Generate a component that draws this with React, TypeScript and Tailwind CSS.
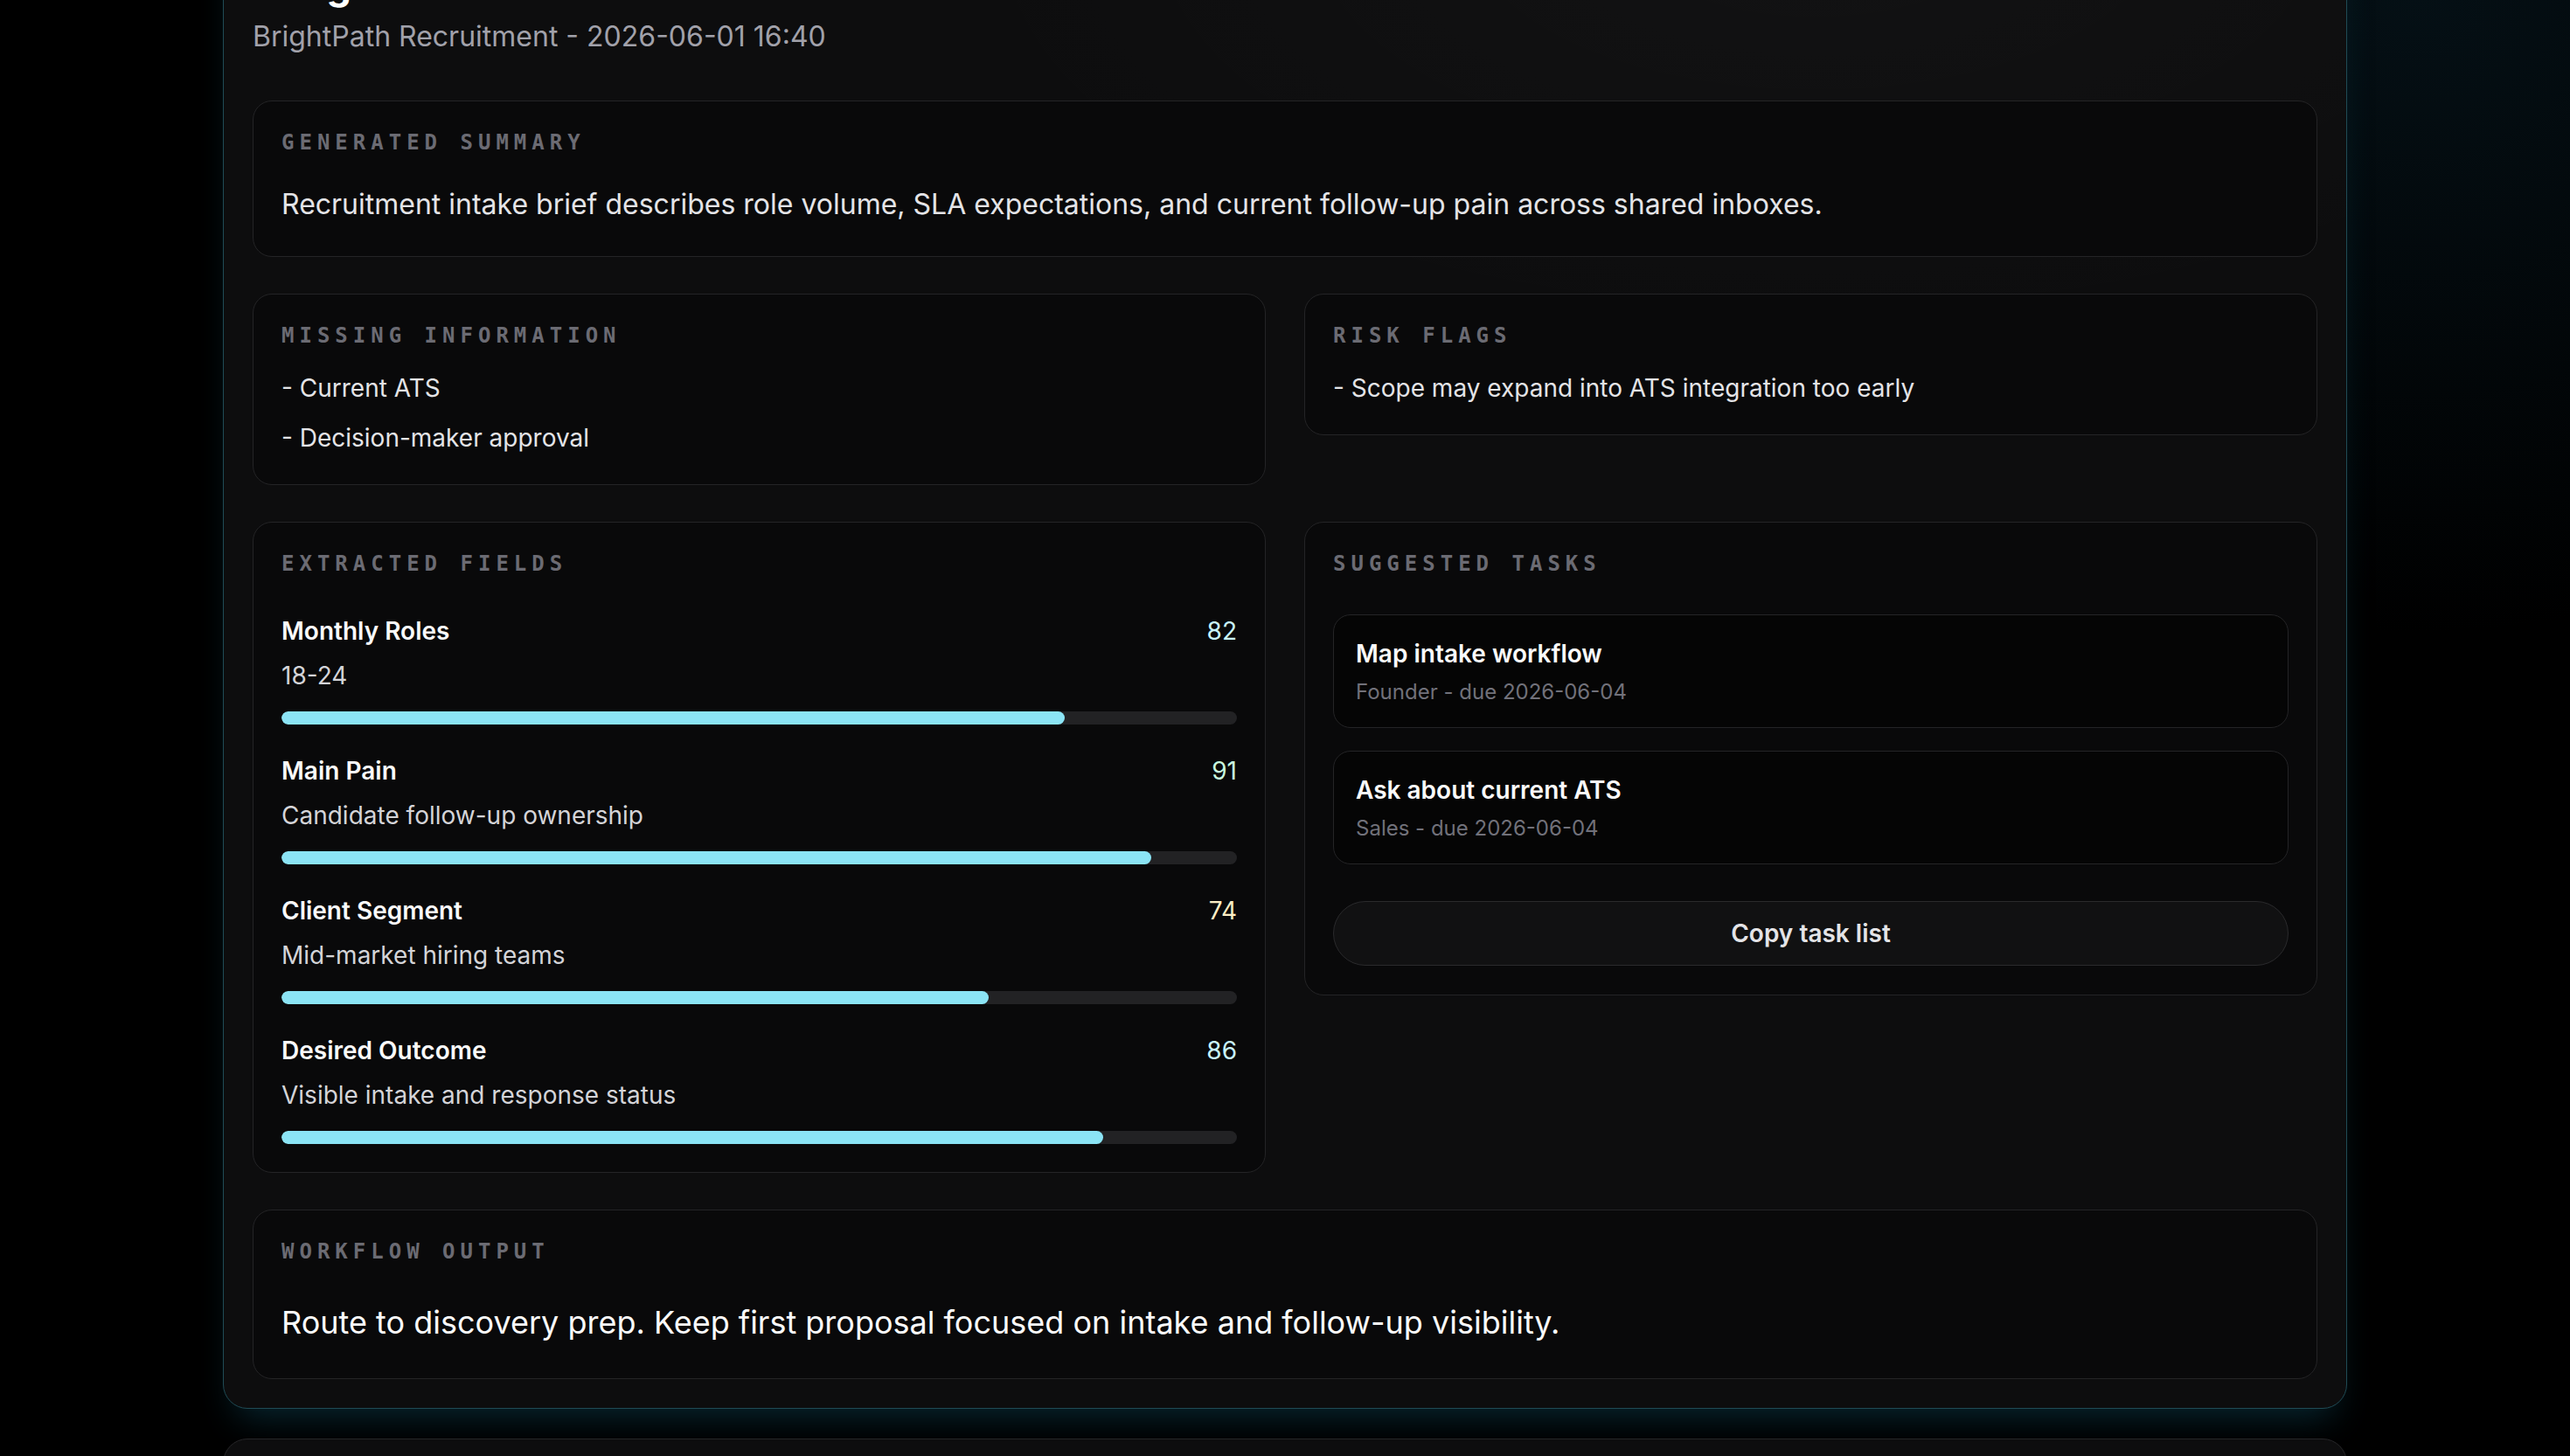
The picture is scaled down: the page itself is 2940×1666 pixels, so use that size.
import React from "react"

const fields = [
  { label: "Monthly Roles", value: "18-24", score: 82 },
  { label: "Main Pain", value: "Candidate follow-up ownership", score: 91 },
  { label: "Client Segment", value: "Mid-market hiring teams", score: 74 },
  { label: "Desired Outcome", value: "Visible intake and response status", score: 86 },
]

const tasks = [
  { title: "Map intake workflow", owner: "Founder", due: "2026-06-04" },
  { title: "Ask about current ATS", owner: "Sales", due: "2026-06-04" },
]

function scoreColor(score: number) {
  if (score >= 90) return "text-[#c8f7df]"
  if (score >= 80) return "text-[#c9f5fc]"
  return "text-[#fdeec4]"
}

function Card({ title, children, className = "" }: { title: string; children: React.ReactNode; className?: string }) {
  return (
    <section className={`rounded-[22px] border border-[#242426] bg-[#09090a] px-[32px] pt-[31px] pb-[32px] ${className}`}>
      <h3 className="font-['DejaVu_Sans_Mono',monospace] text-[24px] leading-[33px] font-bold uppercase tracking-[0.25em] text-[#6b6b73]">
        {title}
      </h3>
      {children}
    </section>
  )
}

export default function App() {
  return (
    <div className="min-h-screen overflow-hidden bg-black bg-[radial-gradient(ellipse_40%_55%_at_94%_0%,rgba(16,52,70,0.3),transparent_70%)] font-['Inter',sans-serif]">
      <div className="mx-auto -mt-[81px] w-[2430px]">
        <div className="rounded-[28px] border border-[#1f4b55] bg-[#0d0d0e] bg-[radial-gradient(ellipse_60%_40%_at_75%_0%,rgba(255,255,255,0.025),transparent_70%)] p-[33px] shadow-[0_24px_40px_-16px_rgba(14,74,94,0.55)]">
          <h1 className="text-[45px] leading-[60px] font-bold text-white">Triage result</h1>
          <p className="mt-[4px] text-[32px] leading-[50px] text-[#a1a1aa]">BrightPath Recruitment - 2026-06-01 16:40</p>

          <div className="mt-[48px] grid grid-cols-2 items-start gap-x-[44px] gap-y-[42px]">
            <Card title="Generated Summary" className="col-span-2">
              <p className="mt-[26px] text-[32px] leading-[55px] text-[#e4e4e7]">
                Recruitment intake brief describes role volume, SLA expectations, and current follow-up pain across shared inboxes.
              </p>
            </Card>

            <Card title="Missing Information" className="pb-[31px]">
              <ul className="mt-[22px] space-y-[15px] text-[28px] leading-[42px] text-[#e4e4e7]">
                <li>- Current ATS</li>
                <li>- Decision-maker approval</li>
              </ul>
            </Card>

            <Card title="Risk Flags" className="pb-[31px]">
              <ul className="mt-[22px] space-y-[15px] text-[28px] leading-[42px] text-[#e4e4e7]">
                <li>- Scope may expand into ATS integration too early</li>
              </ul>
            </Card>

            <Card title="Extracted Fields">
              <div className="mt-[39px] flex flex-col gap-[32px]">
                {fields.map((field) => (
                  <div key={field.label}>
                    <div className="flex items-center justify-between text-[28px] leading-[42px]">
                      <span className="font-semibold text-[#fafafa]">{field.label}</span>
                      <span className={scoreColor(field.score)}>{field.score}</span>
                    </div>
                    <p className="mt-[9px] text-[28px] leading-[42px] text-[#d4d4d8]">{field.value}</p>
                    <div className="mt-[20px] h-[15px] overflow-hidden rounded-full bg-[#222224]">
                      <div className="h-full rounded-full bg-[#8be4f5]" style={{ width: `${field.score}%` }} />
                    </div>
                  </div>
                ))}
              </div>
            </Card>

            <Card title="Suggested Tasks" className="pb-[33px]">
              <div className="mt-[41px] flex flex-col gap-[26px]">
                {tasks.map((task) => (
                  <div key={task.title} className="rounded-[20px] border border-[#242426] bg-[#050505] px-[25px] pt-[23px] pb-[22px]">
                    <p className="text-[28px] leading-[42px] font-semibold text-[#fafafa]">{task.title}</p>
                    <p className="mt-[5px] text-[24px] leading-[36px] text-[#71717a]">
                      {task.owner} - due {task.due}
                    </p>
                  </div>
                ))}
              </div>
              <button className="mt-[42px] h-[74px] w-full rounded-full border border-[#2a2a2c] bg-[#111112] text-[28px] font-semibold text-[#e4e4e7]">
                Copy task list
              </button>
            </Card>

            <Card title="Workflow Output" className="col-span-2 pb-[36px]">
              <p className="mt-[36px] text-[36px] leading-[56px] text-[#fafafa]">
                Route to discovery prep. Keep first proposal focused on intake and follow-up visibility.
              </p>
            </Card>
          </div>
        </div>

        <div className="mt-[34px] h-[240px] rounded-t-[28px] border border-[#262628] bg-[#0d0d0e]" />
      </div>
    </div>
  )
}
